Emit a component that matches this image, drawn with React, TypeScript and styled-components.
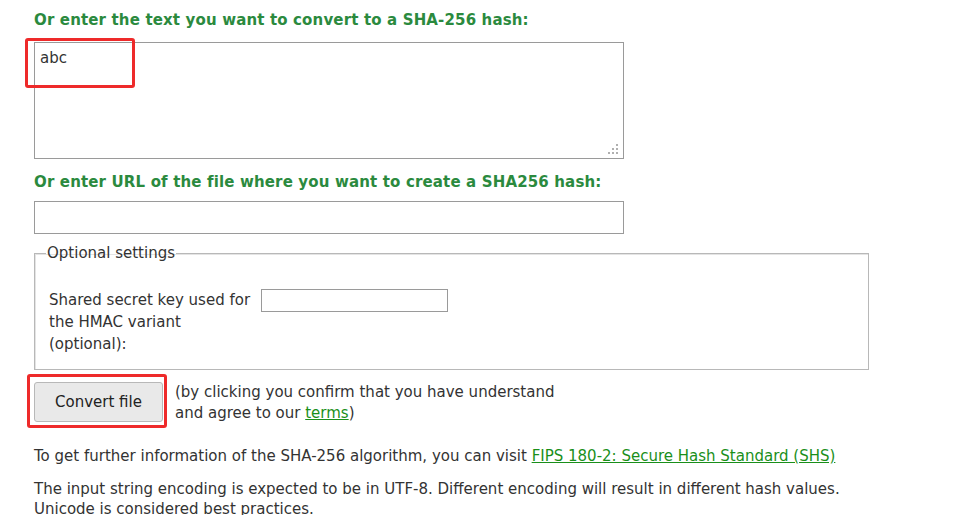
import React from "react";
import styled, { createGlobalStyle } from "styled-components";

const Global = createGlobalStyle`
  html, body { margin: 0; padding: 0; background: #fff; }
  body { font-family: "DejaVu Sans", Verdana, sans-serif; color: #333; font-size: 15px; }
`;

const Page = styled.div`
  padding: 11px 0 0 34px;
  width: 900px;
`;

const Heading = styled.div`
  font-weight: bold;
  color: #2b8a3e;
  font-size: 15px;
  letter-spacing: 0.15px;
  line-height: 18px;
`;

const FieldWrap = styled.div<{ $mt: number }>`
  position: relative;
  width: 590px;
  margin-top: ${(p) => p.$mt}px;
`;

const TextArea = styled.textarea`
  display: block;
  box-sizing: border-box;
  width: 590px;
  height: 117px;
  margin: 0;
  padding: 6px 5px;
  border: 1px solid #9a9a9a;
  font-family: "DejaVu Sans", Verdana, sans-serif;
  font-size: 15px;
  color: #333;
  resize: none;
  outline: none;
`;

const Grip = styled.svg`
  position: absolute;
  right: 5px;
  bottom: 4px;
`;

const Highlight = styled.div<{ $l: number; $t: number; $w: number; $h: number }>`
  position: absolute;
  left: ${(p) => p.$l}px;
  top: ${(p) => p.$t}px;
  width: ${(p) => p.$w}px;
  height: ${(p) => p.$h}px;
  box-sizing: border-box;
  border: 3px solid #ee2a2a;
  border-radius: 3px;
  pointer-events: none;
`;

const UrlInput = styled.input`
  display: block;
  box-sizing: border-box;
  width: 590px;
  height: 33px;
  margin: 0;
  border: 1px solid #9a9a9a;
  outline: none;
`;

const Fieldset = styled.fieldset`
  box-sizing: border-box;
  width: 835px;
  margin: 10px 0 0 0;
  padding: 27px 10px 14px 14px;
  border: 1px solid #b8b8b8;
  box-shadow: inset 1px 1px 0 #e4e4e4;
`;

const Legend = styled.legend`
  padding: 0 1px;
  margin-left: -3px;
  font-size: 15px;
  line-height: 18px;
  color: #333;
`;

const SettingRow = styled.div`
  display: flex;
  align-items: flex-start;
  gap: 8px;
`;

const SettingLabel = styled.label`
  width: 204px;
  line-height: 22px;
  white-space: nowrap;
`;

const SecretInput = styled.input`
  box-sizing: border-box;
  width: 187px;
  height: 23px;
  margin: 0;
  border: 1px solid #9a9a9a;
  outline: none;
`;

const ActionRow = styled.div`
  display: flex;
  align-items: flex-start;
  gap: 12px;
  margin-top: 12px;
`;

const ButtonWrap = styled.div`
  position: relative;
`;

const Button = styled.button`
  box-sizing: border-box;
  width: 129px;
  height: 40px;
  background: #e9e9e9;
  border: 1px solid #b8b8b8;
  border-radius: 3px;
  font-family: "DejaVu Sans", Verdana, sans-serif;
  font-size: 15px;
  color: #222;
  padding: 0;
`;

const Note = styled.div`
  line-height: 21px;
`;

const Link = styled.a`
  color: #1a8f1a;
  text-decoration: underline;
`;

const Para = styled.p<{ $mt: number }>`
  margin: ${(p) => p.$mt}px 0 0 0;
  line-height: 20px;
  white-space: nowrap;
`;

export default function App() {
  return (
    <>
      <Global />
      <Page>
        <Heading>Or enter the text you want to convert to a SHA-256 hash:</Heading>
        <FieldWrap $mt={13}>
          <TextArea defaultValue="abc" />
          <Grip width="11" height="11" viewBox="0 0 11 11">
            <g fill="#b0b0b0">
              <rect x="8" y="0" width="2" height="2" />
              <rect x="4" y="4" width="2" height="2" />
              <rect x="8" y="4" width="2" height="2" />
              <rect x="0" y="8" width="2" height="2" />
              <rect x="4" y="8" width="2" height="2" />
              <rect x="8" y="8" width="2" height="2" />
            </g>
          </Grip>
          <Highlight $l={-9} $t={-4} $w={110} $h={50} />
        </FieldWrap>
        <FieldWrap $mt={14}>
          <Heading>Or enter URL of the file where you want to create a SHA256 hash:</Heading>
        </FieldWrap>
        <FieldWrap $mt={10}>
          <UrlInput type="text" />
        </FieldWrap>
        <Fieldset>
          <Legend>Optional settings</Legend>
          <SettingRow>
            <SettingLabel>
              Shared secret key used for
              <br />
              the HMAC variant
              <br />
              (optional):
            </SettingLabel>
            <SecretInput type="text" />
          </SettingRow>
        </Fieldset>
        <ActionRow>
          <ButtonWrap>
            <Button type="button">Convert file</Button>
            <Highlight $l={-7} $t={-8} $w={140} $h={54} />
          </ButtonWrap>
          <Note>
            (by clicking you confirm that you have understand
            <br />
            and agree to our <Link href="#">terms</Link>)
          </Note>
        </ActionRow>
        <Para $mt={22}>
          To get further information of the SHA-256 algorithm, you can visit{" "}
          <Link href="#">FIPS 180-2: Secure Hash Standard (SHS)</Link>
        </Para>
        <Para $mt={13}>
          The input string encoding is expected to be in UTF-8. Different encoding will result in different hash values.
          <br />
          Unicode is considered best practices.
        </Para>
      </Page>
    </>
  );
}
